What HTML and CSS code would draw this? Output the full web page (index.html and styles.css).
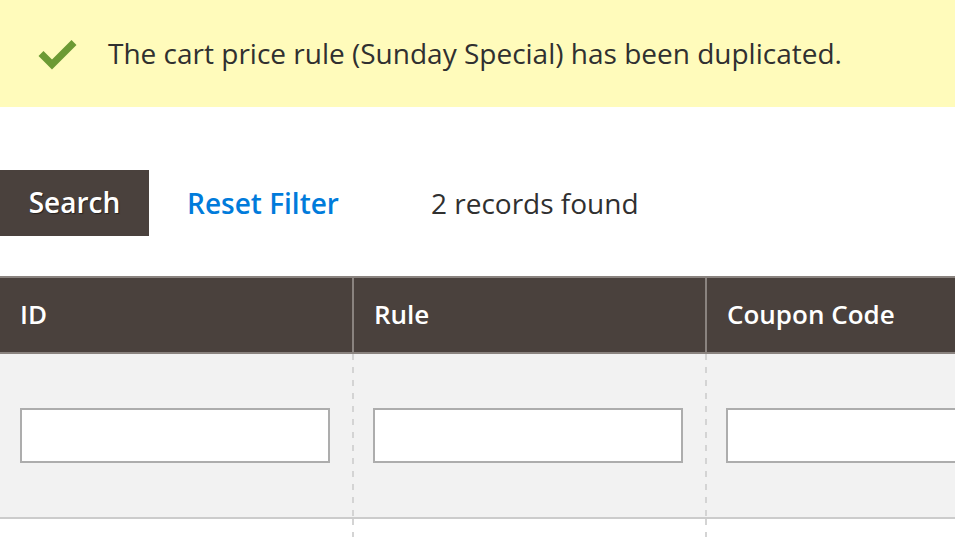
FILE: index.html
```html
<!DOCTYPE html>
<html>
<head>
<meta charset="utf-8">
<link rel="stylesheet" href="styles.css">
</head>
<body>
<div class="message">
  <svg class="check" width="40" height="32" viewBox="0 0 40 32"><path d="M3 15.5 L14 26.5 L36 4.5" fill="none" stroke="#6c9a34" stroke-width="7"/></svg>
  <span class="msg-text">The cart price rule (Sunday Special) has been duplicated.</span>
</div>
<div class="toolbar">
  <button class="search">Search</button>
  <a class="reset">Reset Filter</a>
  <span class="records">2 records found</span>
</div>
<div class="grid">
  <div class="head">
    <div class="hcell c1">ID</div>
    <div class="hcell c2">Rule</div>
    <div class="hcell c3">Coupon Code</div>
  </div>
  <div class="filters">
    <div class="fcell c1"><input class="inp" type="text"></div>
    <div class="fcell c2"><input class="inp" type="text"></div>
    <div class="fcell c3"><input class="inp" type="text"></div>
  </div>
  <div class="rows">
    <div class="rcell c1"></div>
    <div class="rcell c2"></div>
    <div class="rcell c3"></div>
  </div>
</div>
</body>
</html>
```
FILE: styles.css
```css
html, body { margin: 0; padding: 0; }
body {
  width: 955px;
  height: 537px;
  overflow: hidden;
  font-family: "Open Sans", "Liberation Sans", sans-serif;
  background: #fff;
  color: #303030;
}
.message {
  height: 107px;
  background: #fffbbb;
  display: flex;
  align-items: center;
  padding-left: 38px;
  box-sizing: border-box;
}
.check { display: block; flex-shrink: 0; }
.msg-text {
  margin-left: 30px;
  font-size: 28px;
  color: #303030;
  margin-top: -2px;
  white-space: nowrap;
}
.toolbar {
  margin-top: 63px;
  height: 66px;
  display: flex;
  align-items: center;
}
.search {
  width: 149px;
  height: 66px;
  background: #4a413d;
  color: #fff;
  border: 0;
  font-family: "Open Sans", "Liberation Sans", sans-serif;
  font-size: 28px;
  font-weight: 600;
  padding: 0 0 2px 0;
  text-shadow: 1px 1px 1px rgba(0,0,0,0.5);
  flex-shrink: 0;
}
.reset {
  margin-left: 38px;
  font-size: 28px;
  font-weight: 600;
  color: #007bdb;
  white-space: nowrap;
}
.records {
  margin-left: 92px;
  font-size: 28px;
  white-space: nowrap;
}
.grid { margin-top: 40px; }
.head {
  display: flex;
  height: 78px;
  background: #4a413d;
  border-top: 2px solid #8a837f;
  border-bottom: 2px solid #8a837f;
  box-sizing: border-box;
}
.hcell {
  color: #fff;
  font-size: 26px;
  font-weight: 600;
  display: flex;
  align-items: center;
  padding-left: 20px;
  padding-bottom: 2px;
  box-sizing: border-box;
  white-space: nowrap;
}
.c1, .c2 { flex-shrink: 0; }
.c1 { width: 352px; }
.c2 { width: 353px; }
.c3 { flex: 1 1 auto; min-width: 0; }
.head .c2, .head .c3 { border-left: 2px solid #8a837f; }
.filters {
  display: flex;
  height: 165px;
  background: #f2f2f2;
  border-bottom: 2px solid #cccccc;
  box-sizing: border-box;
}
.fcell {
  display: flex;
  align-items: center;
  padding-left: 20px;
  box-sizing: border-box;
}
.filters .c1 { padding-right: 22px; }
.filters .c2 { padding-right: 22px; }
.filters .c2, .filters .c3, .rows .c2, .rows .c3 {
  background-image: linear-gradient(to bottom, #d4d4d4 50%, transparent 50%);
  background-size: 2px 13px;
  background-repeat: repeat-y;
  background-position: 0 0;
}
.filters .c2, .filters .c3 { padding-left: 21px; }
.inp {
  width: 100%;
  min-width: 0;
  height: 55px;
  box-sizing: border-box;
  border: 2px solid #adadad;
  background: #fff;
  margin: 0;
  padding: 0;
}
.filters .c3 .inp { width: 300px; flex-shrink: 0; }
.filters .c3 { overflow: hidden; }
.rows { display: flex; height: 20px; }
```
